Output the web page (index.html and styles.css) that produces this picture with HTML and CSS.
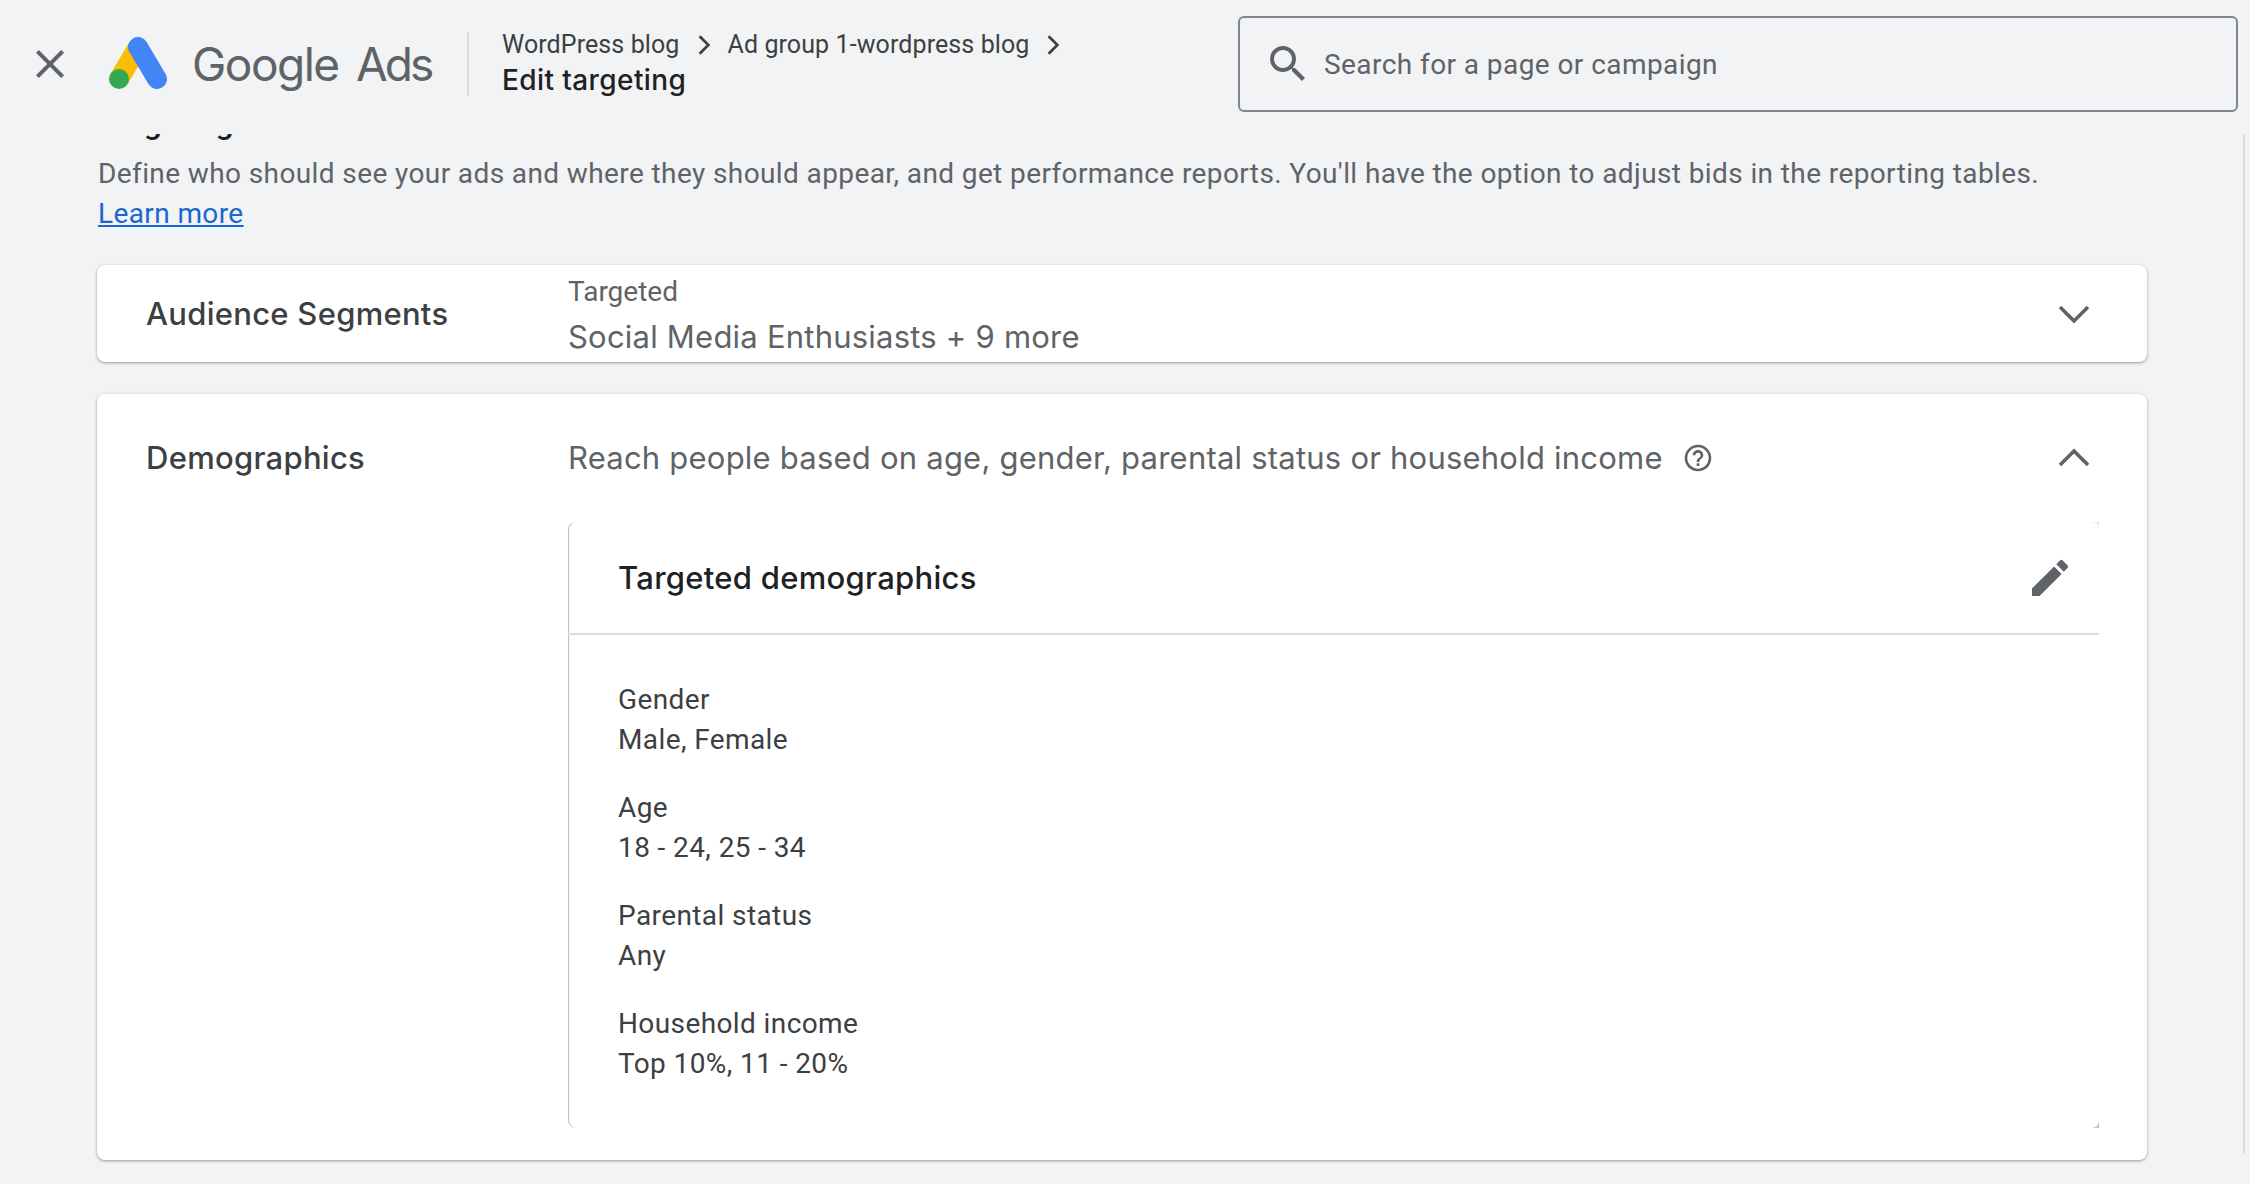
FILE: index.html
```html
<!DOCTYPE html>
<html lang="en">
<head>
    <meta charset="UTF-8">
    <title>Edit targeting - Google Ads</title>
    <link rel="stylesheet" href="styles.css">
</head>
<body>
    <header class="topbar">
        <svg class="icon close-icon" viewBox="0 0 24 24"><path d="M19 6.41 17.59 5 12 10.59 6.41 5 5 6.41 10.59 12 5 17.59 6.41 19 12 13.41 17.59 19 19 17.59 13.41 12z"/></svg>
        <svg class="logo" viewBox="0 0 64 56">
            <path d="M32 11 13 43" class="logo-yellow"/>
            <path d="M32 11 51 43" class="logo-blue"/>
            <circle cx="13" cy="43" r="10" fill="#34a853"/>
        </svg>
        <div class="brand">Google <span class="brand-ads">Ads</span></div>
        <div class="crumbs">
            <div class="crumb-path">
                <span>WordPress blog</span>
                <svg class="crumb-arrow" viewBox="0 0 12 20"><path d="M2 2l8 8-8 8"/></svg>
                <span>Ad group 1-wordpress blog</span>
                <svg class="crumb-arrow" viewBox="0 0 12 20"><path d="M2 2l8 8-8 8"/></svg>
            </div>
            <div class="crumb-title">Edit targeting</div>
        </div>
        <div class="search">
            <svg class="icon" viewBox="0 0 24 24"><path d="M15.5 14h-.79l-.28-.27A6.471 6.471 0 0 0 16 9.5 6.5 6.5 0 1 0 9.5 16c1.61 0 3.09-.59 4.23-1.57l.27.28v.79l5 4.99L20.49 19l-4.99-5zm-6 0C7.01 14 5 11.99 5 9.5S7.01 5 9.5 5 14 7.01 14 9.5 11.99 14 9.5 14z"/></svg>
            <span class="search-text">Search for a page or campaign</span>
        </div>
    </header>

    <main class="content">
        <h2 class="section-title">Targeting</h2>
        <p class="intro">Define who should see your ads and where they should appear, and get performance reports. You'll have the option to adjust bids in the reporting tables.<br><a href="#">Learn more</a></p>

        <section class="card card-collapsed">
            <div class="card-label">Audience Segments</div>
            <div class="card-summary">
                <div class="summary-small">Targeted</div>
                <div class="summary-value">Social Media Enthusiasts + 9 more</div>
            </div>
            <svg class="chevron" viewBox="0 0 32 20"><path d="M2 3l14 14L30 3"/></svg>
        </section>

        <section class="card card-open">
            <div class="card-row">
                <div class="card-label">Demographics</div>
                <div class="card-summary summary-line">
                    <span class="summary-value">Reach people based on age, gender, parental status or household income</span>
                    <svg class="help" viewBox="0 0 24 24"><path d="M11 18h2v-2h-2v2zm1-16C6.48 2 2 6.48 2 12s4.48 10 10 10 10-4.48 10-10S17.52 2 12 2zm0 18c-4.41 0-8-3.59-8-8s3.59-8 8-8 8 3.59 8 8-3.59 8-8 8zm0-14c-2.21 0-4 1.79-4 4h2c0-1.1.9-2 2-2s2 .9 2 2c0 2-3 1.75-3 5h2c0-2.25 3-2.5 3-5 0-2.21-1.79-4-4-4z"/></svg>
                </div>
                <svg class="chevron" viewBox="0 0 32 20"><path d="M2 17L16 3l14 14"/></svg>
            </div>

            <div class="panel">
                <div class="panel-head">
                    <h3>Targeted demographics</h3>
                    <svg class="icon pencil" viewBox="0 0 24 24"><path d="M3 17.25V21h3.75L17.81 9.94l-3.75-3.75L3 17.25zM20.71 7.04c.39-.39.39-1.02 0-1.41l-2.34-2.34a.996.996 0 0 0-1.41 0l-1.83 1.83 3.75 3.75 1.83-1.83z"/></svg>
                </div>
                <div class="panel-body">
                    <div class="facet"><div>Gender</div><div>Male, Female</div></div>
                    <div class="facet"><div>Age</div><div>18 - 24, 25 - 34</div></div>
                    <div class="facet"><div>Parental status</div><div>Any</div></div>
                    <div class="facet"><div>Household income</div><div>Top 10%, 11 - 20%</div></div>
                </div>
            </div>
        </section>
    </main>
</body>
</html>
```

FILE: styles.css
```css
* {
    box-sizing: border-box;
}
html, body {
    height: 100%;
}
body {
    margin: 0;
    overflow: hidden;
    background: #f1f3f4;
    font-family: Roboto, Arial, sans-serif;
    font-size: 28px;
    line-height: 40px;
    color: #3c4043;
}
.icon {
    width: 48px;
    height: 48px;
    flex: none;
    fill: #5f6368;
}

/* top bar */
.topbar {
    position: relative;
    z-index: 2;
    height: 134px;
    display: flex;
    align-items: center;
    padding: 0 12px 6px 26px;
    background: #f1f3f4;
}
.logo {
    width: 64px;
    height: 56px;
    margin-left: 32px;
    flex: none;
}
.logo path {
    fill: none;
    stroke-width: 20px;
}
.logo-yellow {
    stroke: #fbbc04;
}
.logo-blue {
    stroke: #4285f4;
    stroke-linecap: round;
}
.brand {
    margin-left: 22px;
    width: 277px;
    height: 64px;
    border-right: 2px solid #dadce0;
    font-family: Inter, Arial, sans-serif;
    font-size: 46px;
    line-height: 64px;
    letter-spacing: -1.5px;
    color: #5f6368;
    white-space: nowrap;
}
.brand-ads {
    margin-left: 6px;
    letter-spacing: -3px;
}
.crumbs {
    margin-left: 33px;
    padding-bottom: 3px;
}
.crumb-path {
    display: flex;
    align-items: center;
    font-size: 25px;
    line-height: 35px;
    letter-spacing: 0.1px;
    color: #3c4043;
}
.crumb-arrow {
    width: 14px;
    height: 22px;
    margin: 0 17px;
    fill: none;
    stroke: #3c4043;
    stroke-width: 2.4px;
}
.crumb-title {
    font-family: Inter, Roboto, sans-serif;
    font-size: 28px;
    line-height: 36px;
    font-weight: 500;
    letter-spacing: 0.4px;
    color: #202124;
}
.search {
    margin-left: auto;
    width: 1000px;
    height: 96px;
    display: flex;
    align-items: center;
    gap: 12px;
    padding-left: 24px;
    border: 2px solid #80868b;
    border-radius: 6px;
    color: #5f6368;
    letter-spacing: 0.43px;
}
.search-text {
    padding-top: 2px;
}

/* scrolled content */
.content {
    position: relative;
    height: 1050px;
    padding-left: 97px;
    margin-right: 5px;
    border-right: 2px solid #dadce0;
    padding-right: 96px;
}
.content::before {
    content: "";
    position: absolute;
    top: 0;
    right: -2px;
    width: 2px;
    height: 6px;
    background: #f1f3f4;
}
.section-title {
    margin: -31px 0 11px 1px;
    font-size: 32px;
    line-height: 40px;
    font-weight: 500;
    color: #202124;
}
.intro {
    margin: 0 0 31px 1px;
    color: #5f6368;
    letter-spacing: 0.395px;
}
.intro a {
    color: #1967d2;
}

.card {
    background: #fff;
    border-radius: 8px;
    box-shadow: 0 1px 2px rgba(60, 64, 67, 0.3), 0 1px 3px 1px rgba(60, 64, 67, 0.15);
}
.card-label {
    width: 422px;
    flex: none;
    font-family: Inter, Roboto, sans-serif;
    font-size: 31px;
    font-weight: 500;
    letter-spacing: 0.28px;
    color: #3c4043;
}
.card-summary {
    flex: 1;
    color: #5f6368;
}
.summary-value {
    font-family: Inter, Roboto, sans-serif;
    font-size: 31px;
    letter-spacing: 0.22px;
}
.summary-small {
    line-height: 36px;
}
.chevron {
    width: 32px;
    height: 20px;
    flex: none;
    margin-right: 57px;
    fill: none;
    stroke: #5f6368;
    stroke-width: 3.6px;
}
.card-collapsed {
    height: 97px;
    margin-bottom: 32px;
    display: flex;
    align-items: center;
    padding-left: 49px;
}
.card-collapsed .card-summary {
    padding-top: 5px;
}
.card-collapsed .summary-value {
    margin-top: 5px;
    line-height: 44px;
}
.card-open {
    height: 766px;
    padding: 44px 48px 32px 49px;
}
.card-row {
    display: flex;
    align-items: center;
    height: 40px;
    margin-bottom: 44px;
}
.card-row .chevron {
    margin-right: 9px;
}
.summary-line {
    display: flex;
    align-items: center;
    gap: 19px;
}
.help {
    width: 32px;
    height: 32px;
    fill: #5f6368;
}

/* inner panel */
.panel {
    position: relative;
    margin-left: 422px;
    height: 606px;
    border-radius: 8px;
    box-shadow: inset 2px 0 1px -1px rgba(60, 64, 67, 0.35);
}
.panel::before,
.panel::after {
    content: "";
    position: absolute;
    right: 0;
    width: 6px;
    height: 6px;
}
.panel::before {
    top: 0;
    background: radial-gradient(circle at 0 100%, transparent 5px, #e8eaed 6px);
}
.panel::after {
    bottom: 0;
    background: radial-gradient(circle at 0 0, transparent 5px, #bdc1c6 6px);
}
.panel-head {
    height: 113px;
    display: flex;
    align-items: center;
    justify-content: space-between;
    padding: 0 25px 0 50px;
    border-bottom: 2px solid #dadce0;
}
.panel-head h3 {
    margin: 0;
    font-family: Inter, Roboto, sans-serif;
    font-size: 31px;
    font-weight: 500;
    letter-spacing: 0.28px;
    color: #202124;
}
.panel-body {
    padding: 45px 0 0 50px;
}
.facet {
    margin-bottom: 28px;
    letter-spacing: 0.4px;
}
.facet:last-child {
    margin-bottom: 0;
}
```
